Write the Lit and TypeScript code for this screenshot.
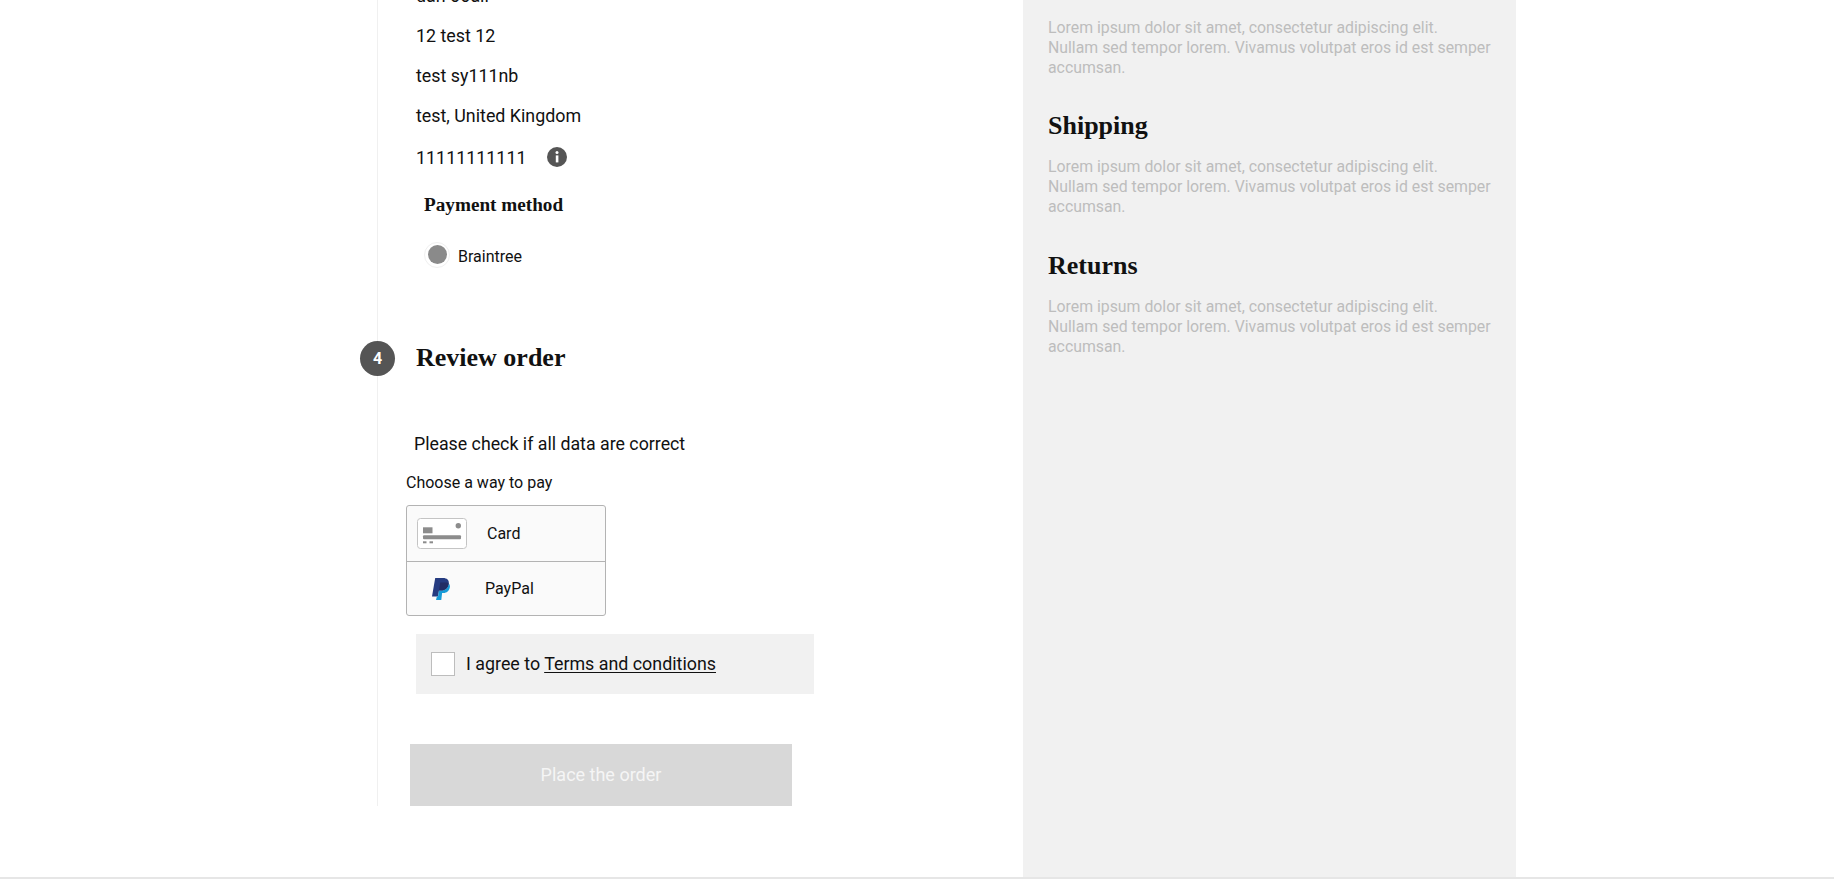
import { LitElement, html, css } from "lit";
import { customElement } from "lit/decorators.js";

const LOREM = html`Lorem ipsum dolor sit amet, consectetur adipiscing elit.<br />Nullam sed tempor lorem. Vivamus volutpat eros id est semper accumsan.`;

@customElement("app-root")
export class AppRoot extends LitElement {
  static styles = css`
    :host { display: block; height: 879px; overflow: hidden; background: #fff; font-family: Roboto, sans-serif; color: #111; }
    .page { height: 877px; border-bottom: 2px solid #e6e6e6; display: flex; box-sizing: content-box; overflow: hidden; }
    .main { width: 1023px; flex: none; padding-left: 377px; box-sizing: border-box; }
    .rail { width: 445px; height: 830px; margin-top: -24px; border-left: 1px solid #f0f0f0; padding-left: 38px; box-sizing: border-box; position: relative; }
    .addr { font-size: 17.85px; line-height: 40px; height: 40px; }
    .phone { display: flex; align-items: center; gap: 21px; font-size: 17.8px; height: 32px; margin-top: 5px; letter-spacing: .05px; }
    .info { width: 20px; height: 20px; display: block; }
    h3.pay { font: 700 19.2px/26px "Liberation Serif", serif; margin: 19px 0 0 8px; color: #111; }
    .radio-row { display: flex; align-items: center; margin: 24px 0 0 8px; gap: 8px; font-size: 16px; height: 28px; }
    .radio { width: 26px; height: 26px; border-radius: 50%; border: 1px solid #f0f0f0; box-sizing: border-box; display: flex; align-items: center; justify-content: center; margin-top: -3px; }
    .radio i { display: block; width: 19px; height: 19px; border-radius: 50%; background: #8a8a8a; }
    .radio-row span { margin-top: 1px; }
    .step-head { display: flex; align-items: center; height: 36px; margin-top: 70px; }
    .badge { position: absolute; left: -18px; width: 35px; height: 35px; border-radius: 50%; background: #555; color: #fff; font: 700 16px/35px Roboto, sans-serif; text-align: center; }
    h2.review { margin: 0; font: 700 26px/36px "Liberation Serif", serif; color: #111; }
    .check { font-size: 17.77px; line-height: 24px; margin: 56px 0 0 -2px; }
    .choose { font-size: 16px; line-height: 20px; margin: 17px 0 0 -10px; }
    .ways { width: 200px; box-sizing: border-box; margin: 12px 0 0 -10px; border: 1px solid #b3b3b3; border-radius: 3px; background: #fafafa; font-size: 16px; }
    .way { display: flex; align-items: center; }
    .way.card { height: 56px; border-bottom: 1px solid #b3b3b3; padding-left: 10px; gap: 20px; box-sizing: border-box; }
    .way.paypal { height: 53px; padding-left: 25px; gap: 35px; }
    .agree { width: 398px; height: 60px; background: #f1f1f1; margin-top: 18px; display: flex; align-items: center; padding-left: 15px; box-sizing: border-box; font-size: 17.85px; gap: 11px; }
    .agree span { margin-top: -1px; }
    .box { width: 24px; height: 24px; background: #fff; border: 1px solid #bdbdbd; box-sizing: border-box; }
    .agree a { color: inherit; text-decoration: underline; text-underline-offset: 2px; }
    .place { display: block; width: 382px; height: 62px; margin: 50px 0 0 -6px; background: #d8d8d8; color: #f5f5f5; border: 0; padding: 0 0 2px; font: 18px Roboto, sans-serif; text-align: center; }
    .side { width: 493px; flex: none; background: #f1f1f1; padding: 0 25px; box-sizing: border-box; }
    .side p { font-size: 15.83px; line-height: 20px; color: #bdbdbd; margin: 0; width: 455px; }
    .side p.first { margin-top: 18px; margin-bottom: -1px; }
    .side h4 { margin: 31px 0 13px; font: 700 26px/36px "Liberation Serif", serif; color: #111; }
  `;

  render() {
    return html`
      <div class="page">
        <div class="main">
          <div class="rail">
            <div class="addr">dan ooall</div>
            <div class="addr">12 test 12</div>
            <div class="addr">test sy111nb</div>
            <div class="addr">test, United Kingdom</div>
            <div class="phone">
              <span>11111111111</span>
              <svg class="info" viewBox="0 0 20 20"><circle cx="10" cy="10" r="10" fill="#555"/><rect x="8.8" y="8.400" width="2.600" height="7" fill="#fff"/><circle cx="10" cy="5.600" r="1.500" fill="#fff"/></svg>
            </div>
            <h3 class="pay">Payment method</h3>
            <div class="radio-row"><div class="radio"><i></i></div><span>Braintree</span></div>
            <div class="step-head"><div class="badge">4</div><h2 class="review">Review order</h2></div>
            <div class="check">Please check if all data are correct</div>
            <div class="choose">Choose a way to pay</div>
            <div class="ways">
              <div class="way card">
                <svg width="50" height="31" viewBox="0 0 50 31"><rect x=".5" y=".5" width="49" height="30" rx="3" fill="#fff" stroke="#c4c4c4"/><rect x="6" y="9.300" width="9.500" height="6" fill="#8c8c8c"/><rect x="6" y="17.300" width="38" height="4" rx="1" fill="#8c8c8c"/><rect x="6" y="23.300" width="3.500" height="2" fill="#8c8c8c"/><rect x="12.500" y="23.300" width="3.500" height="2" fill="#8c8c8c"/><circle cx="41.300" cy="7.700" r="2.700" fill="#8c8c8c"/></svg>
                <span>Card</span>
              </div>
              <div class="way paypal">
                <svg width="18" height="22" viewBox="0 0 18 22"><path d="M3.200 0H11c4 0 6.200 2.200 5.800 5.500-.6 4.500-3.700 7-7.800 7H7L6 18.500H0z" fill="#253b80"/><path d="M16.800 5.500c1 .9 1.400 2.300 1 4-.7 3.300-3 5.500-6.300 5.500h-1.400L9.300 22H4l.9-3.500h1.100l1-6h2c4.100 0 7.200-2.500 7.800-7z" fill="#179bd7"/><path d="M7 12.500h2c4.100 0 7.200-2.500 7.800-7-.9-.7-2.200-1-3.800-1H8.200z" fill="#222d65"/></svg>
                <span>PayPal</span>
              </div>
            </div>
            <div class="agree"><div class="box"></div><span>I agree to <a href="#">Terms and conditions</a></span></div>
            <button class="place">Place the order</button>
          </div>
        </div>
        <div class="side">
          <p class="first">${LOREM}</p>
          <h4>Shipping</h4>
          <p>${LOREM}</p>
          <h4>Returns</h4>
          <p>${LOREM}</p>
        </div>
      </div>
    `;
  }
}
